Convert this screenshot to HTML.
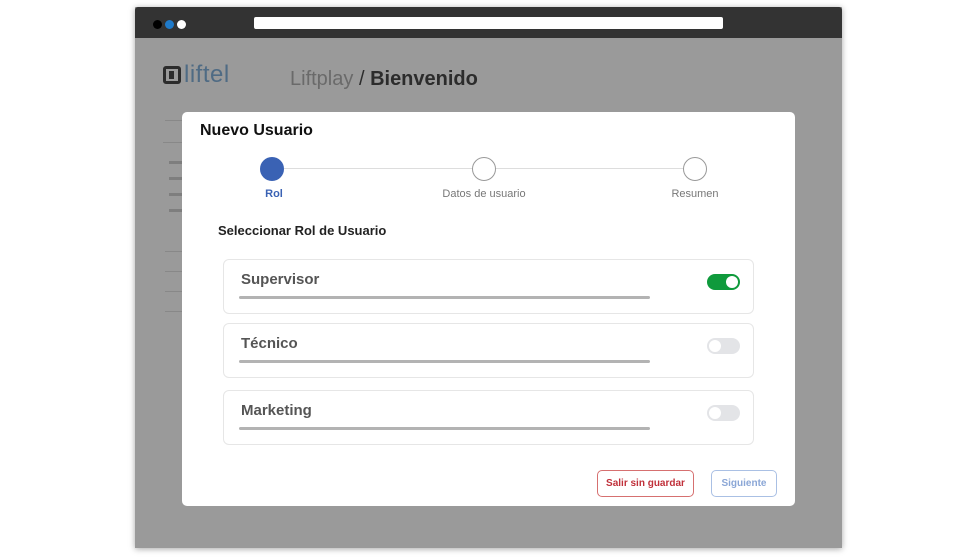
<!DOCTYPE html><html><head><style>
body{margin:0;width:980px;height:560px;background:#fff;position:relative;overflow:hidden;font-family:"Liberation Sans",sans-serif}
.a{position:absolute}
.ln{position:absolute;height:1px;background:#888}
.th{position:absolute;height:3px;background:#7e7e7e}
.card{position:absolute;left:223px;width:529px;height:53px;border:1px solid #e6e6e6;border-radius:6px;background:#fff}
.card .t{position:absolute;left:17px;top:11px;font-size:15px;font-weight:bold;color:#555}
.card .bar{position:absolute;left:15px;top:36px;width:411px;height:3px;background:#b3b3b3;border-radius:2px}
.tg{position:absolute;left:483px;top:14px;width:33px;height:16px;border-radius:8px;background:#e3e4e7}
.tg i{position:absolute;left:2px;top:2px;width:12px;height:12px;border-radius:50%;background:#fff}
.tg.on{background:#0f9a3c}.tg.on i{left:19px}
.c{position:absolute;width:22px;height:22px;border-radius:50%;border:1.5px solid #999;background:#fff;top:157px}
.lb{position:absolute;top:188px;font-size:11px;color:#777;width:120px;text-align:center}
</style></head><body>
<div class="a" style="left:135px;top:7px;width:707px;height:541px;background:#9a9a9a;box-shadow:0 1px 6px rgba(0,0,0,.35)"></div>
<div class="a" style="left:135px;top:7px;width:707px;height:31px;background:#333;border-radius:3px 3px 0 0"></div>
<div class="a" style="left:153px;top:20px;width:9px;height:9px;border-radius:50%;background:#000"></div>
<div class="a" style="left:165px;top:20px;width:9px;height:9px;border-radius:50%;background:#1f7ac9"></div>
<div class="a" style="left:177px;top:20px;width:9px;height:9px;border-radius:50%;background:#fff"></div>
<div class="a" style="left:254px;top:17px;width:469px;height:12px;background:#fff;border-radius:2px"></div>
<div class="a" style="left:163px;top:66px;width:18px;height:18px;border:3px solid #2c2c2c;border-radius:3px;box-sizing:border-box"></div>
<div class="a" style="left:169px;top:71px;width:5px;height:8px;background:#2c2c2c"></div>
<div class="a" style="left:184px;top:61px;font-size:24px;color:#4f6b84;letter-spacing:0.5px">liftel</div>
<div class="a" style="left:290px;top:68px;font-size:20px;color:#6a6a6a">Liftplay <span style="color:#2c2c2c">/ <b>Bienvenido</b></span></div>
<div class="ln" style="left:165px;top:120px;width:17px"></div>
<div class="ln" style="left:163px;top:142px;width:19px"></div>
<div class="th" style="left:169px;top:161px;width:13px"></div>
<div class="th" style="left:169px;top:177px;width:13px"></div>
<div class="th" style="left:169px;top:193px;width:13px"></div>
<div class="th" style="left:169px;top:209px;width:13px"></div>
<div class="ln" style="left:165px;top:251px;width:17px"></div>
<div class="ln" style="left:165px;top:271px;width:17px"></div>
<div class="ln" style="left:165px;top:291px;width:17px"></div>
<div class="ln" style="left:165px;top:311px;width:17px"></div>
<div class="a" style="left:182px;top:112px;width:613px;height:394px;background:#fff;border-radius:5px"></div>
<div class="a" style="left:200px;top:122px;font-size:16px;font-weight:bold;color:#111">Nuevo Usuario</div>
<div class="a" style="left:284px;top:168px;width:400px;height:1px;background:#ddd"></div>
<div class="c" style="left:260px;background:#3a62b4;border-color:#3a62b4"></div>
<div class="c" style="left:472px"></div>
<div class="c" style="left:683px"></div>
<div class="lb" style="left:214px;color:#3a62b4;font-weight:bold">Rol</div>
<div class="lb" style="left:424px">Datos de usuario</div>
<div class="lb" style="left:635px">Resumen</div>
<div class="a" style="left:218px;top:223px;font-size:13px;font-weight:bold;color:#222">Seleccionar Rol de Usuario</div>
<div class="card" style="top:259px"><div class="t">Supervisor</div><div class="bar"></div><div class="tg on"><i></i></div></div>
<div class="card" style="top:323px"><div class="t">Técnico</div><div class="bar"></div><div class="tg"><i></i></div></div>
<div class="card" style="top:390px"><div class="t">Marketing</div><div class="bar"></div><div class="tg"><i></i></div></div>
<div class="a" style="left:597px;top:470px;width:95px;height:25px;border:1px solid #d67070;border-radius:5px;color:#c0303a;font-size:10px;font-weight:bold;text-align:center;line-height:25px">Salir sin guardar</div>
<div class="a" style="left:711px;top:470px;width:64px;height:25px;border:1px solid #aac0e4;border-radius:5px;color:#8aa6d6;font-size:10px;font-weight:bold;text-align:center;line-height:25px">Siguiente</div>
</body></html>
